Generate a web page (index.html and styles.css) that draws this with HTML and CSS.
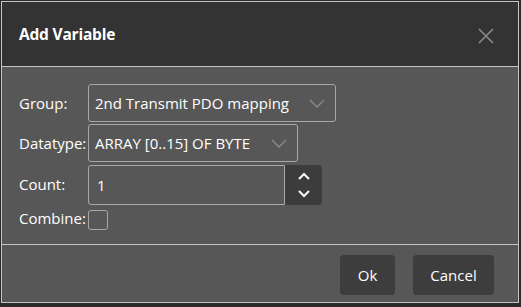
FILE: index.html
```html
<!DOCTYPE html>
<html>
<head>
<meta charset="utf-8">
<link rel="stylesheet" href="styles.css">
</head>
<body>
<div class="dialog">
  <div class="header">
    <span class="title">Add Variable</span>
    <svg class="close" width="16" height="16" viewBox="0 0 16 16"><path d="M1 1L15 15M15 1L1 15" stroke="#8a8a8a" stroke-width="1.6" fill="none"/></svg>
  </div>
  <div class="body">
    <div class="form">
      <label class="lbl">Group:</label>
      <div class="select w1"><span>2nd Transmit PDO mapping</span><svg class="chev" width="16" height="9" viewBox="0 0 16 9"><path d="M1 1L8 8L15 1" stroke="#8c8c8c" stroke-width="1.3" fill="none"/></svg></div>
      <label class="lbl">Datatype:</label>
      <div class="select w2"><span>ARRAY [0..15] OF BYTE</span><svg class="chev" width="16" height="9" viewBox="0 0 16 9"><path d="M1 1L8 8L15 1" stroke="#8c8c8c" stroke-width="1.3" fill="none"/></svg></div>
      <label class="lbl">Count:</label>
      <div class="numwrap">
        <div class="num">1</div>
        <div class="spin">
          <svg width="12" height="8" viewBox="0 0 12 8"><path d="M1 7L6 2L11 7" stroke="#fff" stroke-width="2" fill="none"/></svg>
          <svg width="12" height="8" viewBox="0 0 12 8"><path d="M1 1L6 6L11 1" stroke="#fff" stroke-width="2" fill="none"/></svg>
        </div>
      </div>
      <label class="lbl">Combine:</label>
      <div class="check"></div>
    </div>
  </div>
  <div class="footer">
    <button class="btn ok">Ok</button>
    <button class="btn cancel">Cancel</button>
  </div>
</div>
</body>
</html>
```
FILE: styles.css
```css
html, body {
  margin: 0;
  padding: 0;
}
body {
  background: #2b2b2b;
  width: 521px;
  height: 307px;
  overflow: hidden;
  font-family: "Open Sans", "Noto Sans", sans-serif;
  color: #fff;
}
.dialog {
  margin: 1px 0 0 1px;
  width: 516px;
  border: 1px solid #c4c4c4;
  background: #575757;
}
.header {
  height: 64px;
  background: #333333;
  border-bottom: 1px solid #c4c4c4;
  display: flex;
  align-items: center;
  justify-content: space-between;
  padding: 0 24px 0 17px;
}
.title {
  font-weight: bold;
  font-size: 15.5px;
  letter-spacing: -0.2px;
}
.close {
  margin-top: 3px;
}
.body {
  height: 178px;
  border-bottom: 1px solid #c4c4c4;
  padding: 17px 0 0 17px;
  box-sizing: border-box;
}
.form {
  display: grid;
  grid-template-columns: 69px auto;
  row-gap: 2px;
  align-items: center;
  justify-items: start;
}
.lbl {
  font-size: 15px;
  color: #fff;
  margin-top: -1px;
}
.select {
  box-sizing: border-box;
  height: 38px;
  border: 1px solid #a8a8a8;
  border-radius: 3px;
  display: flex;
  align-items: center;
  justify-content: space-between;
  padding: 0 10px 0 6px;
  font-size: 15px;
}
.w1 { width: 248px; }
.w2 { width: 210px; }
.chev {
  margin-top: 1px;
}
.numwrap {
  display: flex;
  height: 40px;
  margin-top: 1px;
}
.num {
  box-sizing: border-box;
  width: 197px;
  height: 40px;
  border: 1px solid #a8a8a8;
  border-radius: 3px 0 0 3px;
  padding: 0 8px;
  display: flex;
  align-items: center;
  font-size: 15px;
}
.spin {
  width: 37px;
  background: #3c3c3c;
  border-radius: 0 4px 4px 0;
  display: flex;
  flex-direction: column;
  align-items: center;
  justify-content: center;
  gap: 10px;
}
.check {
  box-sizing: border-box;
  width: 20px;
  height: 20px;
  border: 1px solid #a8a8a8;
  border-radius: 3px;
  margin-top: 3px;
}
.footer {
  height: 57px;
  display: flex;
  justify-content: flex-end;
  align-items: flex-start;
  gap: 18px;
  padding: 10px 24px 0 0;
  box-sizing: border-box;
}
.btn {
  height: 40px;
  border: none;
  border-radius: 4px;
  background: #3d3d3d;
  color: #fff;
  font-family: "Open Sans", "Noto Sans", sans-serif;
  font-size: 15px;
  padding: 0;
}
.ok { width: 55px; }
.cancel { width: 81px; }
```
